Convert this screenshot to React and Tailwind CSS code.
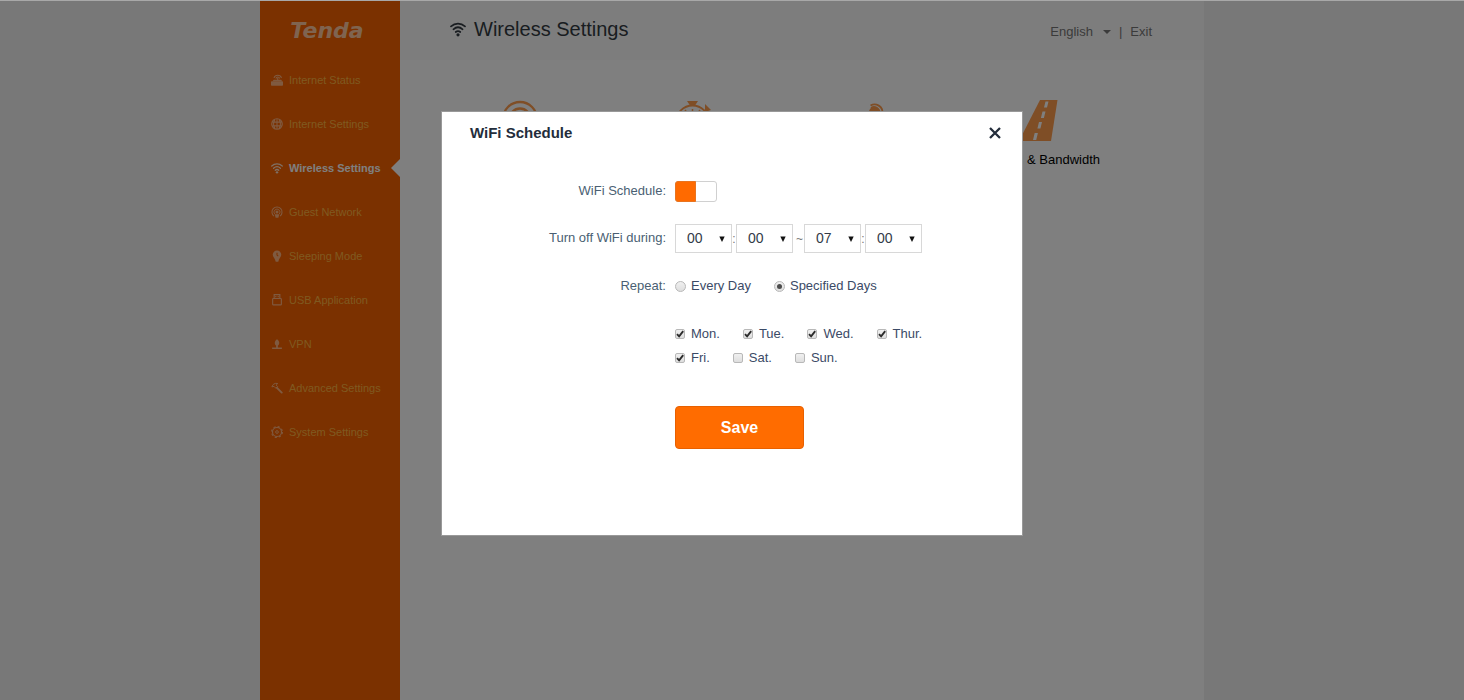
import React, { useState } from "react";

function WifiIcon({ className }) {
  return (
    <svg viewBox="0 0 16 16" className={className} fill="none" stroke="currentColor" strokeWidth="1.7" strokeLinecap="round" aria-hidden="true">
      <path d="M1 5.400C5 1.700 11 1.700 15 5.400" />
      <path d="M3.400 8.300C6.200 5.800 9.800 5.800 12.600 8.300" />
      <path d="M5.700 11C7.100 9.800 8.900 9.800 10.300 11" />
      <circle cx="8" cy="13.800" r="1.600" fill="currentColor" stroke="none" />
    </svg>
  );
}

function RouterIcon() {
  return (
    <g>
      <path d="M4 5.200C5.500 .4 12.500 .4 14 5.200" strokeWidth="1.500" />
      <path d="M6.500 6C7.300 3.400 10.700 3.400 11.500 6" strokeWidth="1.500" />
      <path d="M9 5v4" strokeWidth="1.500" />
      <path d="M3.500 7.500h10l1.500 2h-13z" fill="currentColor" stroke="none" />
      <rect x="0" y="9.800" width="16" height="5.700" rx="1" fill="currentColor" stroke="none" />
    </g>
  );
}

function GlobeIcon() {
  return (
    <g strokeWidth="1.400">
      <circle cx="8" cy="8" r="7" strokeWidth="1.600" />
      <path d="M8 1.500v13M5 2.500c-2 3.500-2 7.500 0 11M11 2.500c2 3.500 2 7.500 0 11M2 5.500h12M2 10.500h12" />
    </g>
  );
}

function GuestIcon() {
  return (
    <g>
      <path d="M4 13.500A6.700 6.700 0 1 1 12 13.500" strokeWidth="1.400" />
      <path d="M5 10.800A4 4 0 1 1 11 10.800" />
      <circle cx="8" cy="8" r="2" fill="currentColor" stroke="none" />
      <path d="M5 11h6l-1.200 4.500H6.200z" fill="currentColor" stroke="none" />
    </g>
  );
}

function SleepIcon() {
  return (
    <path
      fillRule="evenodd"
      fill="currentColor"
      stroke="none"
      d="M8 .5a5.700 5.700 0 0 0-5.700 5.700c0 3 3.200 5 4 9.300h3.400c.8-4.300 4-6.300 4-9.300A5.700 5.700 0 0 0 8 .5zM7.300 3.500h1.400v3l1.500 1.300-1 1-1.900-1.700z"
    />
  );
}

function UsbIcon() {
  return (
    <g strokeWidth="1.500">
      <rect x="2.200" y="6" width="11.600" height="8.500" rx="1" />
      <path d="M4.200 6V.8h7.600V6M6.400 2.500v1.800M9.600 2.500v1.800" />
    </g>
  );
}

function VpnIcon() {
  return (
    <g fill="currentColor" stroke="none">
      <path d="M8 1.500c2 1.200 3 3 3 5 0 1.600-.8 2.800-1.800 3.500v2.500h5.300v2h-13v-2h5.300V10C5.800 9.300 5 8.100 5 6.500c0-2 1-3.800 3-5z" />
    </g>
  );
}

function ToolIcon() {
  return (
    <g>
      <path d="M1.200 6.500C2 3 5 1.200 9 2L6.800 4.200l2 2-2.200 2.200-2.600-2.600z" strokeWidth="1.300" />
      <path d="M8 7.800l6.300 6.300" strokeWidth="2.600" strokeLinecap="round" />
    </g>
  );
}

function GearIcon() {
  return (
    <g>
      <circle cx="8" cy="8" r="6" strokeWidth="1.500" />
      <circle cx="8" cy="8" r="7.200" strokeWidth="1.400" strokeDasharray="2.830 2.830" />
      <circle cx="8" cy="8" r="1.800" />
    </g>
  );
}

const menu = [
  { label: "Internet Status", icon: RouterIcon },
  { label: "Internet Settings", icon: GlobeIcon },
  { label: "Wireless Settings", active: true },
  { label: "Guest Network", icon: GuestIcon },
  { label: "Sleeping Mode", icon: SleepIcon },
  { label: "USB Application", icon: UsbIcon },
  { label: "VPN", icon: VpnIcon },
  { label: "Advanced Settings", icon: ToolIcon },
  { label: "System Settings", icon: GearIcon },
];

function MenuItem({ label, icon: Icon, active }) {
  return (
    <li>
      <a
        href="#"
        className={
          active
            ? "relative flex h-11 items-center gap-1.5 pl-[11px] text-[11px] font-bold text-white"
            : "relative flex h-11 items-center gap-1.5 pl-[11px] text-[11px] text-[#ffb340]"
        }
      >
        {active ? (
          <WifiIcon className="size-3 shrink-0 text-[#ffe0c8]" />
        ) : (
          <svg viewBox="0 0 16 16" className="size-3 shrink-0 text-[#ffb480]" fill="none" stroke="currentColor" strokeWidth="1.200" aria-hidden="true">
            <Icon />
          </svg>
        )}
        <span className="whitespace-nowrap">{label}</span>
        {active && (
          <svg viewBox="0 0 9 18" className="absolute top-1/2 right-0 h-[18px] w-[9px] -translate-y-1/2" aria-hidden="true">
            <path d="M9 0L0 9l9 9z" fill="#fff" />
          </svg>
        )}
      </a>
    </li>
  );
}

function Tiles() {
  return (
    <div className="ml-[35px] grid max-w-[684px] grid-cols-4 pt-10 text-[#ff9c4d]">
      <svg viewBox="0 0 42 42" className="mx-auto size-[42px]" fill="none" stroke="currentColor" strokeWidth="2.300" aria-hidden="true">
        <circle cx="20" cy="19" r="17" />
        <circle cx="20" cy="19" r="10.500" />
        <circle cx="20" cy="19" r="4" fill="currentColor" />
        <path d="M20 20v20" />
      </svg>
      <svg viewBox="0 0 42 42" className="mx-auto size-[42px]" fill="none" stroke="currentColor" strokeWidth="2" aria-hidden="true">
        <path d="M16 1h11l-3 4.500h-5z" fill="currentColor" stroke="none" />
        <circle cx="21.500" cy="22" r="16.500" />
        <path d="M21.500 9v13l8 4M14 10l1.500 2M29 10l-1.500 2" strokeWidth="1.500" />
        <path d="M34 4l6 6-6 2z" fill="currentColor" stroke="none" />
      </svg>
      <svg viewBox="0 0 42 42" className="mx-auto size-[42px]" fill="none" stroke="currentColor" strokeWidth="1.800" aria-hidden="true">
        <circle cx="32" cy="12" r="5" fill="currentColor" stroke="none" />
        <path d="M28.500 5.500A8 8 0 0 1 40.500 13M29 8A5.500 5.500 0 0 1 37.500 13M12 40L28 15" />
      </svg>
      <a href="#" className="flex flex-col items-center gap-2 pl-2 text-[13px] text-black">
        <svg viewBox="0 0 42 42" className="ml-1 size-[42px]" aria-hidden="true">
          <path d="M21 0h17.500L32 41H0z" fill="#ff9c4d" />
          <path d="M26.500 1.500h3l-1.500 6h-3zM23.500 11.500h3l-1.600 6.500h-3zM20 22h3l-1.600 6.500h-3zM15.700 33h3.200l-1.700 7h-3.200z" fill="#fff" />
        </svg>
        <span className="whitespace-nowrap">Channel &amp; Bandwidth</span>
      </a>
    </div>
  );
}

function TimeSelect({ label, initial, count }) {
  const [value, setValue] = useState(initial);
  return (
    <span className="relative">
      <select
        aria-label={label}
        value={value}
        onChange={(e) => setValue(e.target.value)}
        className="block h-[29px] w-[57px] appearance-none border border-[#d8d8d8] bg-white pl-[11px] text-[14px] text-[#333b48]"
      >
        {Array.from({ length: count }, (_, i) => String(i).padStart(2, "0")).map((n) => (
          <option key={n}>{n}</option>
        ))}
      </select>
      <svg viewBox="0 0 6 6" className="pointer-events-none absolute top-3 right-[7px] size-1.5" aria-hidden="true">
        <path d="M0.300 0.500h5.400L3 6z" fill="#111" />
      </svg>
    </span>
  );
}

function RadioOption({ label, checked, onChange }) {
  return (
    <label className="flex items-center gap-[5px]">
      <span className="relative flex">
        <input type="radio" name="repeat" checked={checked} onChange={onChange} className="size-[11px] appearance-none rounded-full border border-[#b8b8b8] bg-linear-to-b from-[#f0f0f0] to-[#dedede]" />
        {checked && <span className="pointer-events-none absolute inset-[3px] rounded-full bg-[#4c4c4c]" />}
      </span>
      {label}
    </label>
  );
}

function DayOption({ label, initial }) {
  const [checked, setChecked] = useState(initial);
  return (
    <label className="flex items-center gap-1.5">
      <span className="relative flex">
        <input type="checkbox" checked={checked} onChange={() => setChecked(!checked)} className="size-[10px] appearance-none rounded-[2px] border border-[#b8b8b8] bg-linear-to-b from-[#f0f0f0] to-[#dedede]" />
        {checked && (
          <svg viewBox="0 0 10 10" className="pointer-events-none absolute inset-0 size-[10px]" fill="none" stroke="#2b2b2b" strokeWidth="1.900" aria-hidden="true">
            <path d="M2 5.200l2.100 2.200L8.200 2.200" />
          </svg>
        )}
      </span>
      {label}
    </label>
  );
}

const rowClass = "grid grid-cols-[224px_1fr] items-center gap-[9px]";

function ScheduleDialog() {
  const [enabled, setEnabled] = useState(true);
  const [repeat, setRepeat] = useState("days");
  return (
    <section role="dialog" aria-modal="true" aria-labelledby="dialog-title" className="w-[582px] max-w-full border border-[#999999] bg-white pb-[86px] text-[13px] text-[#3b4a66]">
      <header className="flex h-[42px] items-center justify-between pr-5 pl-7">
        <h2 id="dialog-title" className="text-[15px] font-bold text-[#232d3b]">WiFi Schedule</h2>
        <button type="button" aria-label="Close" className="p-px">
          <svg viewBox="0 0 12 12" className="size-3" stroke="#232d3b" strokeWidth="2.300" aria-hidden="true">
            <path d="M1 1l10 10M11 1L1 11" />
          </svg>
        </button>
      </header>

      <div className={`${rowClass} mt-[26px] h-[22px]`}>
        <label htmlFor="schedule-switch" className="text-right text-[#4a5f73]">WiFi Schedule:</label>
        <span className="relative flex h-[21px] w-[42px]">
          <input id="schedule-switch" type="checkbox" role="switch" checked={enabled} onChange={() => setEnabled(!enabled)} className="h-full w-full appearance-none rounded-[3px] border border-[#d0d0d0] bg-white" />
          {enabled && <span className="pointer-events-none absolute inset-y-0 left-0 w-[21px] rounded-l-[3px] border border-[#e87420] bg-[#ff6a00]" />}
        </span>
      </div>

      <div className={`${rowClass} mt-[22px] h-[29px]`}>
        <span className="pb-0.5 text-right text-[#4a5f73]">Turn off WiFi during:</span>
        <span className="flex items-center text-[12px] text-[#777]">
          <TimeSelect label="Start hour" initial="00" count={24} />
          <span className="w-1 text-center">:</span>
          <TimeSelect label="Start minute" initial="00" count={60} />
          <span className="w-[11px] pl-[3px]">~</span>
          <TimeSelect label="End hour" initial="07" count={24} />
          <span className="w-1 text-center">:</span>
          <TimeSelect label="End minute" initial="00" count={60} />
        </span>
      </div>

      <div className={`${rowClass} mt-[21px]`}>
        <span className="text-right text-[#4a5f73]">Repeat:</span>
        <div className="flex h-6 items-center gap-[23px]">
          <RadioOption label="Every Day" checked={repeat === "all"} onChange={() => setRepeat("all")} />
          <RadioOption label="Specified Days" checked={repeat === "days"} onChange={() => setRepeat("days")} />
        </div>
      </div>

      <div className="mt-6 flex flex-col pl-[233px]">
        <div className="flex h-6 items-center gap-[23px]">
          <DayOption label="Mon." initial={true} />
          <DayOption label="Tue." initial={true} />
          <DayOption label="Wed." initial={true} />
          <DayOption label="Thur." initial={true} />
        </div>
        <div className="flex h-6 items-center gap-[23px]">
          <DayOption label="Fri." initial={true} />
          <DayOption label="Sat." initial={false} />
          <DayOption label="Sun." initial={false} />
        </div>
        <button type="button" className="mt-9 h-[43px] w-[129px] rounded-[4px] border border-[#e86000] bg-[#ff6c00] text-[16px] font-bold text-white">Save</button>
      </div>
    </section>
  );
}

export default function App() {
  return (
    <div className="min-h-screen bg-[#f0f0f0] font-['Liberation_Sans',Arial,sans-serif]">
      <div className="mx-auto flex min-h-screen max-w-[944px]">
        <nav className="w-[140px] shrink-0 bg-[#f66200]">
          <div className="flex h-[58px] items-center justify-center pt-0.5 pr-1.5 font-['DejaVu_Sans',sans-serif] text-[22px] font-bold text-[#ffc9a0] italic">Tenda</div>
          <ul>
            {menu.map((item) => (
              <MenuItem key={item.label} {...item} />
            ))}
          </ul>
        </nav>
        <main className="min-w-0 flex-1 bg-white">
          <header className="flex h-[60px] items-center justify-between bg-[#fbfbfb] pr-[52px] pl-[50px]">
            <h1 className="flex items-center gap-2 pb-0.5 text-[20px] text-[#333a42]">
              <WifiIcon className="size-4" />
              Wireless Settings
            </h1>
            <div className="flex items-center gap-2 pt-1 text-[13px] text-[#777]">
              <button type="button" className="flex items-center gap-2.5">
                English
                <svg viewBox="0 0 8 4" className="h-1 w-2" aria-hidden="true">
                  <path d="M0 0h8L4 4z" fill="currentColor" />
                </svg>
              </button>
              <span>|</span>
              <a href="#">Exit</a>
            </div>
          </header>
          <Tiles />
        </main>
      </div>
      <div className="fixed inset-0 flex items-start justify-center border-t border-[#a8a8a8] bg-black/50 pt-[110px]">
        <ScheduleDialog />
      </div>
    </div>
  );
}
